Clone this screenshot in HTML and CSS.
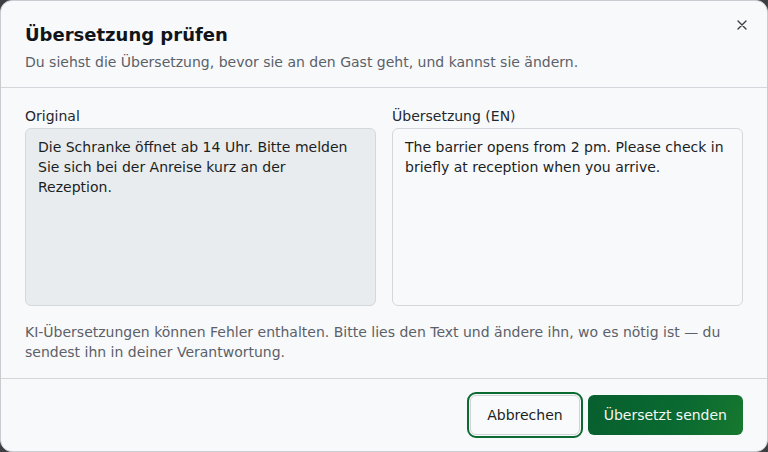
FILE: index.html
```html
<!DOCTYPE html>
<html lang="de">
<head>
<meta charset="utf-8">
<title>Übersetzung prüfen</title>
<link rel="stylesheet" href="styles.css">
</head>
<body>
<div class="dialog">
  <header class="head">
    <h1 class="title">Übersetzung prüfen</h1>
    <p class="subtitle">Du siehst die Übersetzung, bevor sie an den Gast geht, und kannst sie ändern.</p>
    <button class="close" aria-label="Schließen">
      <svg width="10" height="10" viewBox="0 0 10 10"><path d="M1 1L9 9M9 1L1 9" stroke="#3a3f45" stroke-width="1.4" stroke-linecap="round"/></svg>
    </button>
  </header>
  <main class="body">
    <div class="cols">
      <div class="col">
        <div class="label">Original</div>
        <div class="box box-ro">Die Schranke öffnet ab 14 Uhr. Bitte melden Sie sich bei der Anreise kurz an der Rezeption.</div>
      </div>
      <div class="col">
        <div class="label">Übersetzung (EN)</div>
        <div class="box">The barrier opens from 2 pm. Please check in briefly at reception when you arrive.</div>
      </div>
    </div>
    <p class="note">KI-Übersetzungen können Fehler enthalten. Bitte lies den Text und ändere ihn, wo es nötig ist — du sendest ihn in deiner Verantwortung.</p>
  </main>
  <footer class="foot">
    <button class="btn btn-secondary">Abbrechen</button>
    <button class="btn btn-primary">Übersetzt senden</button>
  </footer>
</div>
</body>
</html>
```
FILE: styles.css
```css
* { box-sizing: border-box; }
html, body { margin: 0; height: 100%; }
body {
  background: #3d3f42;
  font-family: "DejaVu Sans", "Noto Sans", sans-serif;
  font-size: 14px;
  line-height: 20px;
}
.dialog {
  width: 768px;
  height: 452px;
  background: #f8f9fb;
  border: 1px solid #c9cdd2;
  border-radius: 12px;
  display: flex;
  flex-direction: column;
  overflow: hidden;
}
.head {
  position: relative;
  padding: 21px 24px 15px;
  border-bottom: 1px solid #d3d6da;
}
.title {
  margin: 0;
  font-size: 18px;
  line-height: 25px;
  font-weight: bold;
  color: #111418;
}
.subtitle {
  margin: 5px 0 0;
  color: #5b6168;
}
.close {
  position: absolute;
  top: 14px;
  right: 15px;
  width: 20px;
  height: 20px;
  padding: 0;
  border: 0;
  background: transparent;
  display: flex;
  align-items: center;
  justify-content: center;
}
.body {
  padding: 18px 24px 16px;
  border-bottom: 1px solid #d3d6da;
}
.cols {
  display: grid;
  grid-template-columns: 1fr 1fr;
  gap: 16px;
}
.label {
  color: #24282d;
  margin-bottom: 2px;
}
.box {
  height: 178px;
  padding: 8px 12px;
  border: 1px solid #d4d8dc;
  border-radius: 6px;
  background: #f8f9fb;
  color: #1b1f23;
}
.box-ro {
  background: #e9ecef;
}
.note {
  margin: 16px 0 0;
  color: #5b6168;
}
.foot {
  flex: 1;
  display: flex;
  justify-content: flex-end;
  align-items: flex-start;
  gap: 8px;
  padding: 16px 24px;
}
.btn {
  height: 40px;
  padding: 0 16px;
  border-radius: 6px;
  font-family: inherit;
  font-size: 14px;
}
.btn-secondary {
  background: #f9fafb;
  border: 1px solid #d0d4d8;
  color: #1b1f23;
  outline: 2px solid #0b6a31;
  outline-offset: 1px;
}
.btn-primary {
  border: 0;
  color: #f2f7f3;
  background: linear-gradient(110deg, #075f2e 0%, #0a6a31 60%, #17782f 100%);
}
```
